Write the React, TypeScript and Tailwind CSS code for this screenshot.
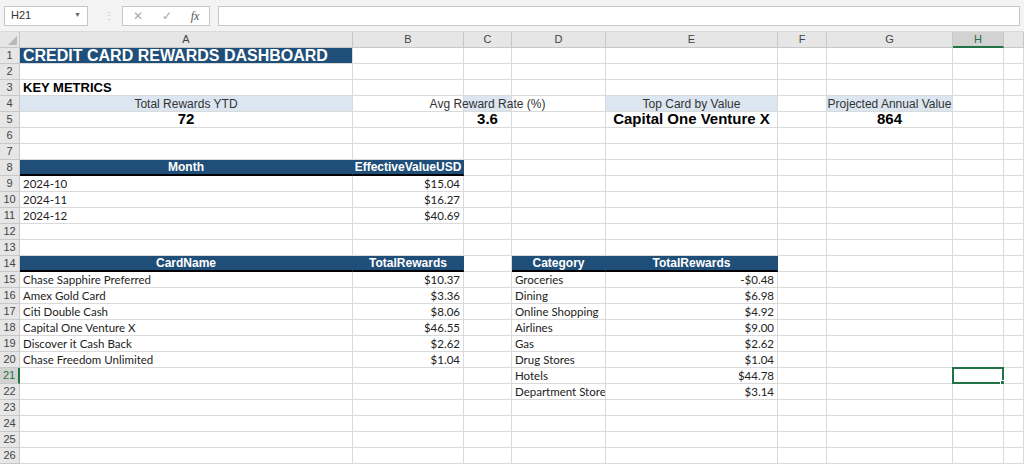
import React from "react";

const COLS = ["A", "B", "C", "D", "E", "F", "G", "H", "I"];
const WIDTHS = [333, 111, 48, 94, 172, 49, 126, 51, 20];
const ARIAL = { fontFamily: '"Liberation Sans", Arial, sans-serif' };
const BODY = { fontFamily: 'Lato, "Open Sans", sans-serif' };

type Cell = {
  t?: string;
  kind?: "title" | "section" | "label" | "metric" | "head" | "text" | "num";
};

const data: Record<number, Record<string, Cell>> = {
  1: { A: { t: "CREDIT CARD REWARDS DASHBOARD", kind: "title" } },
  3: { A: { t: "KEY METRICS", kind: "section" } },
  4: {
    A: { t: "Total Rewards YTD", kind: "label" },
    C: { t: "Avg Reward Rate (%)", kind: "label" },
    E: { t: "Top Card by Value", kind: "label" },
    G: { t: "Projected Annual Value", kind: "label" },
  },
  5: {
    A: { t: "72", kind: "metric" },
    C: { t: "3.6", kind: "metric" },
    E: { t: "Capital One Venture X", kind: "metric" },
    G: { t: "864", kind: "metric" },
  },
  8: { A: { t: "Month", kind: "head" }, B: { t: "EffectiveValueUSD", kind: "head" } },
  9: { A: { t: "2024-10", kind: "text" }, B: { t: "$15.04", kind: "num" } },
  10: { A: { t: "2024-11", kind: "text" }, B: { t: "$16.27", kind: "num" } },
  11: { A: { t: "2024-12", kind: "text" }, B: { t: "$40.69", kind: "num" } },
  14: {
    A: { t: "CardName", kind: "head" },
    B: { t: "TotalRewards", kind: "head" },
    D: { t: "Category", kind: "head" },
    E: { t: "TotalRewards", kind: "head" },
  },
};

const cards = [
  ["Chase Sapphire Preferred", "$10.37"],
  ["Amex Gold Card", "$3.36"],
  ["Citi Double Cash", "$8.06"],
  ["Capital One Venture X", "$46.55"],
  ["Discover it Cash Back", "$2.62"],
  ["Chase Freedom Unlimited", "$1.04"],
];
const cats = [
  ["Groceries", "-$0.48"],
  ["Dining", "$6.98"],
  ["Online Shopping", "$4.92"],
  ["Airlines", "$9.00"],
  ["Gas", "$2.62"],
  ["Drug Stores", "$1.04"],
  ["Hotels", "$44.78"],
  ["Department Stores", "$3.14"],
];
cards.forEach(([n, v], i) => {
  data[15 + i] = { ...(data[15 + i] || {}), A: { t: n, kind: "text" }, B: { t: v, kind: "num" } };
});
cats.forEach(([n, v], i) => {
  data[15 + i] = { ...(data[15 + i] || {}), D: { t: n, kind: "text" }, E: { t: v, kind: "num" } };
});

function CellView({ cell, col, row }: { cell?: Cell; col: string; row: number }) {
  const selected = col === "H" && row === 21;
  const base = "relative h-4 border-r border-b border-[#dadada] flex items-center whitespace-nowrap";
  if (!cell) {
    return (
      <div className={base}>
        {selected && (
          <div className="absolute -left-px -top-px -right-px -bottom-px border-2 border-[#217346]">
            <div className="absolute -right-[3px] -bottom-[3px] w-[5px] h-[5px] bg-[#217346] border border-white" />
          </div>
        )}
      </div>
    );
  }
  switch (cell.kind) {
    case "title":
      return (
        <div className={`${base} bg-[#1f4e79] pl-[3px] text-white font-bold text-[16px]`} style={ARIAL}>
          {cell.t}
        </div>
      );
    case "section":
      return <div className={`${base} pl-[3px] font-bold text-[13px] text-black`} style={ARIAL}>{cell.t}</div>;
    case "label":
      return (
        <div className={`${base} bg-[#dce6f1] justify-center overflow-visible text-[12px] text-[#333]`} style={ARIAL}>
          <span>{cell.t}</span>
        </div>
      );
    case "metric":
      return (
        <div className={`${base} justify-center overflow-visible font-bold text-[15px] text-black`} style={ARIAL}>
          <span>{cell.t}</span>
        </div>
      );
    case "head":
      return (
        <div className={`${base} bg-[#1f4e79] justify-center border-b-2 border-b-black border-r-[#1f4e79] text-white font-bold text-[12px]`} style={ARIAL}>
          {cell.t}
        </div>
      );
    case "num":
      return <div className={`${base} justify-end pr-[3px] text-[11.5px] text-[#222]`} style={BODY}>{cell.t}</div>;
    default:
      return <div className={`${base} pl-[3px] overflow-hidden text-[11.5px] text-[#222]`} style={BODY}>{cell.t}</div>;
  }
}

export default function App() {
  const template = `20px ${WIDTHS.map((w) => w + "px").join(" ")}`;
  const rows = Array.from({ length: 26 }, (_, i) => i + 1);
  return (
    <div className="w-[1024px] h-[464px] overflow-hidden bg-white" style={ARIAL}>
      <div className="h-[32px] bg-[#f3f3f3] flex items-center gap-2 px-1 border-b border-[#dadada]">
        <div className="w-[84px] h-[20px] bg-white border border-[#c6c6c6] flex items-center justify-between px-1.5 text-[11px] text-[#333]">
          <span>H21</span>
          <span className="text-[7px] text-[#666]">▼</span>
        </div>
        <span className="text-[#bbb] text-[10px] ml-2">⋮</span>
        <div className="w-[88px] h-[20px] bg-white border border-[#c6c6c6] flex items-center justify-around text-[#aaa] text-[12px]">
          <span>✕</span>
          <span>✓</span>
          <span className="italic text-[#555] text-[12px]" style={{ fontFamily: '"Liberation Serif", serif' }}>fx</span>
        </div>
        <div className="flex-1 h-[20px] bg-white border border-[#c6c6c6]" />
      </div>
      <div className="grid" style={{ gridTemplateColumns: template }}>
        <div className="h-4 bg-[#e6e6e6] border-r border-b border-[#c8c8c8] flex items-end justify-end p-[2px]">
          <div className="w-0 h-0 border-l-[9px] border-l-transparent border-b-[9px] border-b-[#b8b8b8]" />
        </div>
        {COLS.map((c) => (
          <div
            key={c}
            className={
              c === "H"
                ? "h-4 bg-[#d2d2d2] border-r border-b-2 border-[#c8c8c8] border-b-[#217346] flex items-center justify-center text-[11px] text-[#217346]"
                : "h-4 bg-[#e6e6e6] border-r border-b border-[#c8c8c8] flex items-center justify-center text-[11px] text-[#444]"
            }
          >
            {c === "I" ? "" : c}
          </div>
        ))}
        {rows.map((r) => (
          <React.Fragment key={r}>
            <div
              className={
                r === 21
                  ? "h-4 bg-[#d2d2d2] border-r-2 border-b border-[#c8c8c8] border-r-[#217346] flex items-center justify-center text-[11px] text-[#217346]"
                  : "h-4 bg-[#e6e6e6] border-r border-b border-[#c8c8c8] flex items-center justify-center text-[11px] text-[#444]"
              }
            >
              {r}
            </div>
            {COLS.map((c) => (
              <CellView key={c} col={c} row={r} cell={data[r]?.[c]} />
            ))}
          </React.Fragment>
        ))}
      </div>
    </div>
  );
}
